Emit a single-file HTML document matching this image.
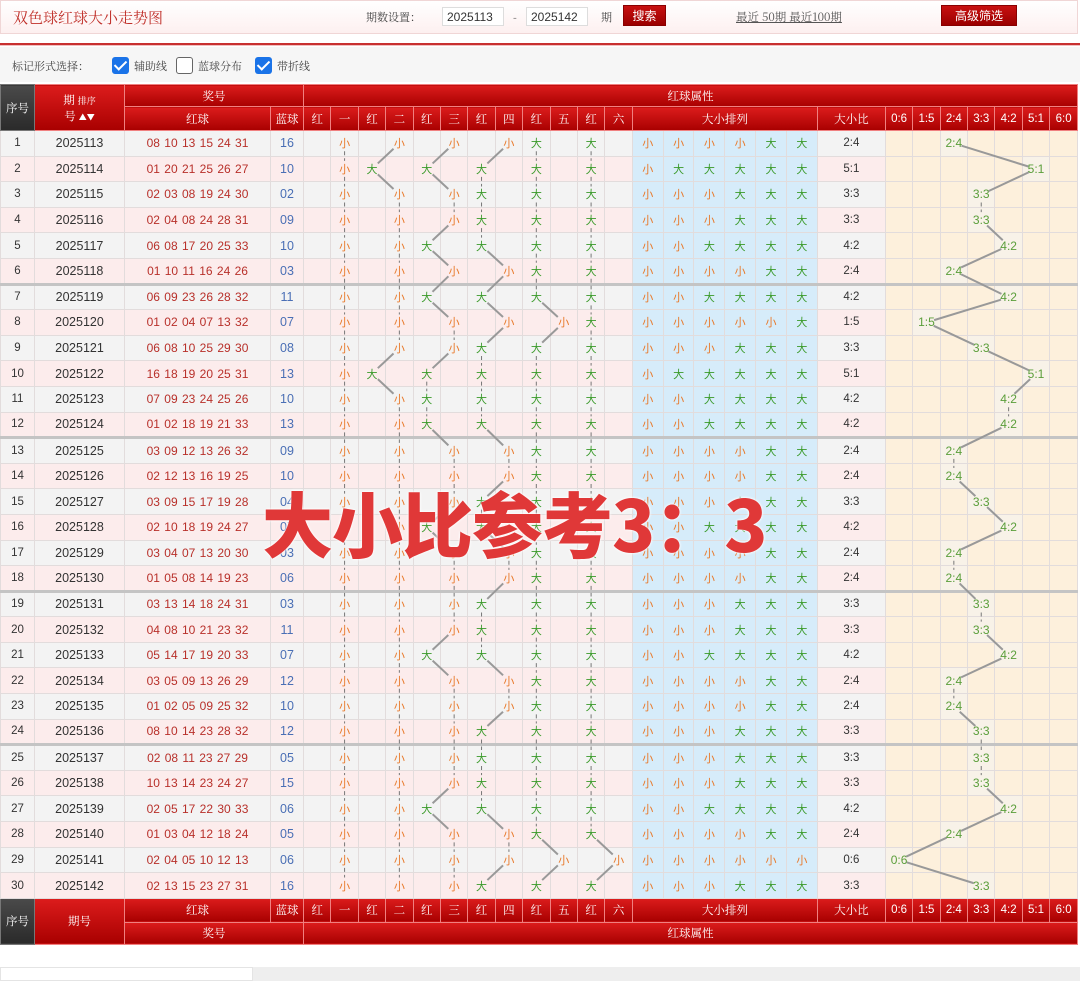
<!DOCTYPE html>
<html><head><meta charset="utf-8">
<style>
*{box-sizing:border-box;margin:0;padding:0}
body{width:1080px;height:981px;overflow:hidden;background:#fff;font-family:"Liberation Sans","Noto Sans CJK SC",sans-serif;position:relative}
.top{position:absolute;left:0;top:0;width:1078px;height:34px;background:linear-gradient(#fff,#fdf0f0);border:1px solid #f0d6d6;font-family:"Noto Serif CJK SC",serif}
.title{position:absolute;left:12px;top:6px;font-size:15px;color:#c0302a}
.lbl{position:absolute;top:8px;font-size:11px;color:#444}
.inp{position:absolute;top:6px;width:62px;height:19px;border:1px solid #ddd;background:#fff;font:12px "Liberation Sans",sans-serif;color:#333;padding:2px 4px}
.btn{position:absolute;background:linear-gradient(#c81010,#9a0000);color:#fff;font-size:12px;text-align:center;border:1px solid #800;font-family:"Noto Sans CJK SC",sans-serif}
.lnk{position:absolute;left:735px;top:8px;font-size:11.5px;color:#555;text-decoration:underline}
.redline{position:absolute;left:0;top:43px;width:1080px;height:3px;border-top:2px solid #c83030;border-bottom:1px solid #f0c0c0}
.opt{position:absolute;left:0;top:47px;width:1080px;height:35px;background:#f6f6f6;font-family:"Noto Serif CJK SC",serif;font-size:11px;color:#444}
.cb{position:absolute;top:10px;width:17px;height:17px;border-radius:3px}
.cb.on{background:#1a73e8}
.cb.on:after{content:"";position:absolute;left:5px;top:1px;width:5px;height:10px;border:solid #fff;border-width:0 2.5px 2.5px 0;transform:rotate(45deg)}
.cb.off{border:1.5px solid #666;background:#fff}
table{position:absolute;left:0;top:84px;width:1077px;border-collapse:collapse;table-layout:fixed}
th{background:linear-gradient(#dc1c1c,#a80000);color:#fff;font-weight:normal;font-size:11.5px;border:1px solid #f08080;font-family:"Noto Serif CJK SC",serif;height:22px;padding:0}
th.dk{background:linear-gradient(#4a4a4a,#2a2a2a);border-color:#777}
th.sm{font-family:"Liberation Sans",sans-serif;font-size:11.5px}
thead tr:nth-child(2) th,tfoot tr:nth-child(1) th{height:24px}
tbody tr{height:25.6px}
td{border:1px solid #e2dcdc;text-align:center;font-size:11.5px;color:#333;padding:0;white-space:nowrap;overflow:hidden}
tbody tr:nth-child(odd) td{background:#f3f3f3}
tbody tr:nth-child(even) td{background:#fcecec}
tbody tr td:nth-child(n+17):nth-child(-n+22){background:#d6ecfa}
tbody tr td:nth-child(n+24){background:#fdf0dc}
tbody tr td.c{background:#f8f2e8}
td:nth-child(2){font-size:12.5px}
td.rb{color:#b8302a;font-size:12px;word-spacing:1px}
td.bb{color:#4a6fb5;font-size:12.5px}
td.s{color:#e8792a;font-family:"Noto Sans CJK SC",sans-serif;font-size:11px}
td.g{color:#3a9a2a;font-family:"Noto Sans CJK SC",sans-serif;font-size:11px}
td.c{color:#5a9e3a;font-size:12px}
i{font-style:normal;position:relative;z-index:2}
tr.gp td{border-top:3px solid #c4c4c4}
#ov{position:absolute;left:0;top:0;width:1080px;height:981px;pointer-events:none;z-index:3}
.wm{position:absolute;left:262px;top:471px;font-family:"Noto Sans CJK SC",sans-serif;font-weight:900;font-size:71px;letter-spacing:-1px;color:#e03838;z-index:5;text-shadow:0 0 3px #fff,0 0 2px #fff;white-space:nowrap}
.bot{position:absolute;left:0;top:967px;width:1080px;height:14px;background:#eee}
.bot div{width:253px;height:14px;background:#fff;border:1px solid #e4e4e4}
</style></head><body>
<div class="top">
<div class="title">双色球红球大小走势图</div>
<div class="lbl" style="left:365px">期数设置：</div>
<div class="inp" style="left:441px">2025113</div>
<div class="lbl" style="left:512px">-</div>
<div class="inp" style="left:525px">2025142</div>
<div class="lbl" style="left:600px">期</div>
<div class="btn" style="left:622px;top:4px;width:43px;height:21px;line-height:19px">搜索</div>
<div class="lnk">最近 50期 最近100期</div>
<div class="btn" style="left:940px;top:4px;width:76px;height:21px;line-height:19px">高级筛选</div>
</div>
<div class="redline"></div>
<div class="opt">
<span style="position:absolute;left:12px;top:11px">标记形式选择：</span>
<div class="cb on" style="left:112px"></div><span style="position:absolute;left:134px;top:11px">辅助线</span>
<div class="cb off" style="left:176px"></div><span style="position:absolute;left:198px;top:11px">蓝球分布</span>
<div class="cb on" style="left:255px"></div><span style="position:absolute;left:277px;top:11px">带折线</span>
</div>
<table>
<colgroup><col style="width:34px"><col style="width:90px"><col style="width:146px"><col style="width:33px">
<col style="width:27.4px"><col style="width:27.4px"><col style="width:27.4px"><col style="width:27.4px"><col style="width:27.4px"><col style="width:27.4px"><col style="width:27.4px"><col style="width:27.4px"><col style="width:27.4px"><col style="width:27.4px"><col style="width:27.4px"><col style="width:27.6px">
<col style="width:30.8px"><col style="width:30.8px"><col style="width:30.8px"><col style="width:30.8px"><col style="width:30.8px"><col style="width:31px">
<col style="width:68px">
<col style="width:27.4px"><col style="width:27.4px"><col style="width:27.4px"><col style="width:27.4px"><col style="width:27.4px"><col style="width:27.4px"><col style="width:27.6px"></colgroup>
<thead>
<tr><th class="dk" rowspan="2">序号</th><th rowspan="2">期 <span style="font-size:9px">排序</span><br>号 <span style="font-size:8px">▲▼</span></th><th colspan="2">奖号</th><th colspan="26">红球属性</th></tr>
<tr><th>红球</th><th>蓝球</th><th>红</th><th>一</th><th>红</th><th>二</th><th>红</th><th>三</th><th>红</th><th>四</th><th>红</th><th>五</th><th>红</th><th>六</th><th colspan="6">大小排列</th><th>大小比</th><th class="sm">0:6</th><th class="sm">1:5</th><th class="sm">2:4</th><th class="sm">3:3</th><th class="sm">4:2</th><th class="sm">5:1</th><th class="sm">6:0</th></tr>
</thead>
<tbody>
<tr><td>1<td>2025113<td class=rb>08 10 13 15 24 31<td class=bb>16<td><td class=s><i>小</i><td><td class=s><i>小</i><td><td class=s><i>小</i><td><td class=s><i>小</i><td class=g><i>大</i><td><td class=g><i>大</i><td><td class=s>小<td class=s>小<td class=s>小<td class=s>小<td class=g>大<td class=g>大<td>2:4<td><td><td class=c><i>2:4</i><td><td><td><td></tr>
<tr><td>2<td>2025114<td class=rb>01 20 21 25 26 27<td class=bb>10<td><td class=s><i>小</i><td class=g><i>大</i><td><td class=g><i>大</i><td><td class=g><i>大</i><td><td class=g><i>大</i><td><td class=g><i>大</i><td><td class=s>小<td class=g>大<td class=g>大<td class=g>大<td class=g>大<td class=g>大<td>5:1<td><td><td><td><td><td class=c><i>5:1</i><td></tr>
<tr><td>3<td>2025115<td class=rb>02 03 08 19 24 30<td class=bb>02<td><td class=s><i>小</i><td><td class=s><i>小</i><td><td class=s><i>小</i><td class=g><i>大</i><td><td class=g><i>大</i><td><td class=g><i>大</i><td><td class=s>小<td class=s>小<td class=s>小<td class=g>大<td class=g>大<td class=g>大<td>3:3<td><td><td><td class=c><i>3:3</i><td><td><td></tr>
<tr><td>4<td>2025116<td class=rb>02 04 08 24 28 31<td class=bb>09<td><td class=s><i>小</i><td><td class=s><i>小</i><td><td class=s><i>小</i><td class=g><i>大</i><td><td class=g><i>大</i><td><td class=g><i>大</i><td><td class=s>小<td class=s>小<td class=s>小<td class=g>大<td class=g>大<td class=g>大<td>3:3<td><td><td><td class=c><i>3:3</i><td><td><td></tr>
<tr><td>5<td>2025117<td class=rb>06 08 17 20 25 33<td class=bb>10<td><td class=s><i>小</i><td><td class=s><i>小</i><td class=g><i>大</i><td><td class=g><i>大</i><td><td class=g><i>大</i><td><td class=g><i>大</i><td><td class=s>小<td class=s>小<td class=g>大<td class=g>大<td class=g>大<td class=g>大<td>4:2<td><td><td><td><td class=c><i>4:2</i><td><td></tr>
<tr><td>6<td>2025118<td class=rb>01 10 11 16 24 26<td class=bb>03<td><td class=s><i>小</i><td><td class=s><i>小</i><td><td class=s><i>小</i><td><td class=s><i>小</i><td class=g><i>大</i><td><td class=g><i>大</i><td><td class=s>小<td class=s>小<td class=s>小<td class=s>小<td class=g>大<td class=g>大<td>2:4<td><td><td class=c><i>2:4</i><td><td><td><td></tr>
<tr class=gp><td>7<td>2025119<td class=rb>06 09 23 26 28 32<td class=bb>11<td><td class=s><i>小</i><td><td class=s><i>小</i><td class=g><i>大</i><td><td class=g><i>大</i><td><td class=g><i>大</i><td><td class=g><i>大</i><td><td class=s>小<td class=s>小<td class=g>大<td class=g>大<td class=g>大<td class=g>大<td>4:2<td><td><td><td><td class=c><i>4:2</i><td><td></tr>
<tr><td>8<td>2025120<td class=rb>01 02 04 07 13 32<td class=bb>07<td><td class=s><i>小</i><td><td class=s><i>小</i><td><td class=s><i>小</i><td><td class=s><i>小</i><td><td class=s><i>小</i><td class=g><i>大</i><td><td class=s>小<td class=s>小<td class=s>小<td class=s>小<td class=s>小<td class=g>大<td>1:5<td><td class=c><i>1:5</i><td><td><td><td><td></tr>
<tr><td>9<td>2025121<td class=rb>06 08 10 25 29 30<td class=bb>08<td><td class=s><i>小</i><td><td class=s><i>小</i><td><td class=s><i>小</i><td class=g><i>大</i><td><td class=g><i>大</i><td><td class=g><i>大</i><td><td class=s>小<td class=s>小<td class=s>小<td class=g>大<td class=g>大<td class=g>大<td>3:3<td><td><td><td class=c><i>3:3</i><td><td><td></tr>
<tr><td>10<td>2025122<td class=rb>16 18 19 20 25 31<td class=bb>13<td><td class=s><i>小</i><td class=g><i>大</i><td><td class=g><i>大</i><td><td class=g><i>大</i><td><td class=g><i>大</i><td><td class=g><i>大</i><td><td class=s>小<td class=g>大<td class=g>大<td class=g>大<td class=g>大<td class=g>大<td>5:1<td><td><td><td><td><td class=c><i>5:1</i><td></tr>
<tr><td>11<td>2025123<td class=rb>07 09 23 24 25 26<td class=bb>10<td><td class=s><i>小</i><td><td class=s><i>小</i><td class=g><i>大</i><td><td class=g><i>大</i><td><td class=g><i>大</i><td><td class=g><i>大</i><td><td class=s>小<td class=s>小<td class=g>大<td class=g>大<td class=g>大<td class=g>大<td>4:2<td><td><td><td><td class=c><i>4:2</i><td><td></tr>
<tr><td>12<td>2025124<td class=rb>01 02 18 19 21 33<td class=bb>13<td><td class=s><i>小</i><td><td class=s><i>小</i><td class=g><i>大</i><td><td class=g><i>大</i><td><td class=g><i>大</i><td><td class=g><i>大</i><td><td class=s>小<td class=s>小<td class=g>大<td class=g>大<td class=g>大<td class=g>大<td>4:2<td><td><td><td><td class=c><i>4:2</i><td><td></tr>
<tr class=gp><td>13<td>2025125<td class=rb>03 09 12 13 26 32<td class=bb>09<td><td class=s><i>小</i><td><td class=s><i>小</i><td><td class=s><i>小</i><td><td class=s><i>小</i><td class=g><i>大</i><td><td class=g><i>大</i><td><td class=s>小<td class=s>小<td class=s>小<td class=s>小<td class=g>大<td class=g>大<td>2:4<td><td><td class=c><i>2:4</i><td><td><td><td></tr>
<tr><td>14<td>2025126<td class=rb>02 12 13 16 19 25<td class=bb>10<td><td class=s><i>小</i><td><td class=s><i>小</i><td><td class=s><i>小</i><td><td class=s><i>小</i><td class=g><i>大</i><td><td class=g><i>大</i><td><td class=s>小<td class=s>小<td class=s>小<td class=s>小<td class=g>大<td class=g>大<td>2:4<td><td><td class=c><i>2:4</i><td><td><td><td></tr>
<tr><td>15<td>2025127<td class=rb>03 09 15 17 19 28<td class=bb>04<td><td class=s><i>小</i><td><td class=s><i>小</i><td><td class=s><i>小</i><td class=g><i>大</i><td><td class=g><i>大</i><td><td class=g><i>大</i><td><td class=s>小<td class=s>小<td class=s>小<td class=g>大<td class=g>大<td class=g>大<td>3:3<td><td><td><td class=c><i>3:3</i><td><td><td></tr>
<tr><td>16<td>2025128<td class=rb>02 10 18 19 24 27<td class=bb>07<td><td class=s><i>小</i><td><td class=s><i>小</i><td class=g><i>大</i><td><td class=g><i>大</i><td><td class=g><i>大</i><td><td class=g><i>大</i><td><td class=s>小<td class=s>小<td class=g>大<td class=g>大<td class=g>大<td class=g>大<td>4:2<td><td><td><td><td class=c><i>4:2</i><td><td></tr>
<tr><td>17<td>2025129<td class=rb>03 04 07 13 20 30<td class=bb>03<td><td class=s><i>小</i><td><td class=s><i>小</i><td><td class=s><i>小</i><td><td class=s><i>小</i><td class=g><i>大</i><td><td class=g><i>大</i><td><td class=s>小<td class=s>小<td class=s>小<td class=s>小<td class=g>大<td class=g>大<td>2:4<td><td><td class=c><i>2:4</i><td><td><td><td></tr>
<tr><td>18<td>2025130<td class=rb>01 05 08 14 19 23<td class=bb>06<td><td class=s><i>小</i><td><td class=s><i>小</i><td><td class=s><i>小</i><td><td class=s><i>小</i><td class=g><i>大</i><td><td class=g><i>大</i><td><td class=s>小<td class=s>小<td class=s>小<td class=s>小<td class=g>大<td class=g>大<td>2:4<td><td><td class=c><i>2:4</i><td><td><td><td></tr>
<tr class=gp><td>19<td>2025131<td class=rb>03 13 14 18 24 31<td class=bb>03<td><td class=s><i>小</i><td><td class=s><i>小</i><td><td class=s><i>小</i><td class=g><i>大</i><td><td class=g><i>大</i><td><td class=g><i>大</i><td><td class=s>小<td class=s>小<td class=s>小<td class=g>大<td class=g>大<td class=g>大<td>3:3<td><td><td><td class=c><i>3:3</i><td><td><td></tr>
<tr><td>20<td>2025132<td class=rb>04 08 10 21 23 32<td class=bb>11<td><td class=s><i>小</i><td><td class=s><i>小</i><td><td class=s><i>小</i><td class=g><i>大</i><td><td class=g><i>大</i><td><td class=g><i>大</i><td><td class=s>小<td class=s>小<td class=s>小<td class=g>大<td class=g>大<td class=g>大<td>3:3<td><td><td><td class=c><i>3:3</i><td><td><td></tr>
<tr><td>21<td>2025133<td class=rb>05 14 17 19 20 33<td class=bb>07<td><td class=s><i>小</i><td><td class=s><i>小</i><td class=g><i>大</i><td><td class=g><i>大</i><td><td class=g><i>大</i><td><td class=g><i>大</i><td><td class=s>小<td class=s>小<td class=g>大<td class=g>大<td class=g>大<td class=g>大<td>4:2<td><td><td><td><td class=c><i>4:2</i><td><td></tr>
<tr><td>22<td>2025134<td class=rb>03 05 09 13 26 29<td class=bb>12<td><td class=s><i>小</i><td><td class=s><i>小</i><td><td class=s><i>小</i><td><td class=s><i>小</i><td class=g><i>大</i><td><td class=g><i>大</i><td><td class=s>小<td class=s>小<td class=s>小<td class=s>小<td class=g>大<td class=g>大<td>2:4<td><td><td class=c><i>2:4</i><td><td><td><td></tr>
<tr><td>23<td>2025135<td class=rb>01 02 05 09 25 32<td class=bb>10<td><td class=s><i>小</i><td><td class=s><i>小</i><td><td class=s><i>小</i><td><td class=s><i>小</i><td class=g><i>大</i><td><td class=g><i>大</i><td><td class=s>小<td class=s>小<td class=s>小<td class=s>小<td class=g>大<td class=g>大<td>2:4<td><td><td class=c><i>2:4</i><td><td><td><td></tr>
<tr><td>24<td>2025136<td class=rb>08 10 14 23 28 32<td class=bb>12<td><td class=s><i>小</i><td><td class=s><i>小</i><td><td class=s><i>小</i><td class=g><i>大</i><td><td class=g><i>大</i><td><td class=g><i>大</i><td><td class=s>小<td class=s>小<td class=s>小<td class=g>大<td class=g>大<td class=g>大<td>3:3<td><td><td><td class=c><i>3:3</i><td><td><td></tr>
<tr class=gp><td>25<td>2025137<td class=rb>02 08 11 23 27 29<td class=bb>05<td><td class=s><i>小</i><td><td class=s><i>小</i><td><td class=s><i>小</i><td class=g><i>大</i><td><td class=g><i>大</i><td><td class=g><i>大</i><td><td class=s>小<td class=s>小<td class=s>小<td class=g>大<td class=g>大<td class=g>大<td>3:3<td><td><td><td class=c><i>3:3</i><td><td><td></tr>
<tr><td>26<td>2025138<td class=rb>10 13 14 23 24 27<td class=bb>15<td><td class=s><i>小</i><td><td class=s><i>小</i><td><td class=s><i>小</i><td class=g><i>大</i><td><td class=g><i>大</i><td><td class=g><i>大</i><td><td class=s>小<td class=s>小<td class=s>小<td class=g>大<td class=g>大<td class=g>大<td>3:3<td><td><td><td class=c><i>3:3</i><td><td><td></tr>
<tr><td>27<td>2025139<td class=rb>02 05 17 22 30 33<td class=bb>06<td><td class=s><i>小</i><td><td class=s><i>小</i><td class=g><i>大</i><td><td class=g><i>大</i><td><td class=g><i>大</i><td><td class=g><i>大</i><td><td class=s>小<td class=s>小<td class=g>大<td class=g>大<td class=g>大<td class=g>大<td>4:2<td><td><td><td><td class=c><i>4:2</i><td><td></tr>
<tr><td>28<td>2025140<td class=rb>01 03 04 12 18 24<td class=bb>05<td><td class=s><i>小</i><td><td class=s><i>小</i><td><td class=s><i>小</i><td><td class=s><i>小</i><td class=g><i>大</i><td><td class=g><i>大</i><td><td class=s>小<td class=s>小<td class=s>小<td class=s>小<td class=g>大<td class=g>大<td>2:4<td><td><td class=c><i>2:4</i><td><td><td><td></tr>
<tr><td>29<td>2025141<td class=rb>02 04 05 10 12 13<td class=bb>06<td><td class=s><i>小</i><td><td class=s><i>小</i><td><td class=s><i>小</i><td><td class=s><i>小</i><td><td class=s><i>小</i><td><td class=s><i>小</i><td class=s>小<td class=s>小<td class=s>小<td class=s>小<td class=s>小<td class=s>小<td>0:6<td class=c><i>0:6</i><td><td><td><td><td><td></tr>
<tr><td>30<td>2025142<td class=rb>02 13 15 23 27 31<td class=bb>16<td><td class=s><i>小</i><td><td class=s><i>小</i><td><td class=s><i>小</i><td class=g><i>大</i><td><td class=g><i>大</i><td><td class=g><i>大</i><td><td class=s>小<td class=s>小<td class=s>小<td class=g>大<td class=g>大<td class=g>大<td>3:3<td><td><td><td class=c><i>3:3</i><td><td><td></tr>
</tbody>
<tfoot>
<tr><th class="dk" rowspan="2">序号</th><th rowspan="2">期号</th><th>红球</th><th>蓝球</th><th>红</th><th>一</th><th>红</th><th>二</th><th>红</th><th>三</th><th>红</th><th>四</th><th>红</th><th>五</th><th>红</th><th>六</th><th colspan="6">大小排列</th><th>大小比</th><th class="sm">0:6</th><th class="sm">1:5</th><th class="sm">2:4</th><th class="sm">3:3</th><th class="sm">4:2</th><th class="sm">5:1</th><th class="sm">6:0</th></tr>
<tr><th colspan="2">奖号</th><th colspan="26">红球属性</th></tr>
</tfoot>
</table>
<svg id="ov" xmlns="http://www.w3.org/2000/svg"></svg>
<div class="wm">大小比参考3：3</div>
<div class="bot"><div></div></div>
<script>
(function(){
var svg=document.getElementById('ov'),NS='http://www.w3.org/2000/svg';
var rows=[].slice.call(document.querySelectorAll('tbody tr'));
var pts=rows.map(function(r){return [].slice.call(r.querySelectorAll('i')).map(function(e){var b=e.getBoundingClientRect();return [b.left+b.width/2,b.top+b.height/2];});});
for(var r=0;r<pts.length-1;r++){for(var k=0;k<pts[r].length;k++){
var a=pts[r][k],b=pts[r+1][k];if(!a||!b)continue;
var l=document.createElementNS(NS,'line');
if(Math.abs(a[0]-b[0])<2){
l.setAttribute('x1',a[0]);l.setAttribute('x2',b[0]);l.setAttribute('y1',a[1]+8);l.setAttribute('y2',b[1]-8);
l.setAttribute('stroke','#777');l.setAttribute('stroke-width','1');l.setAttribute('stroke-dasharray','4 3');
}else{
var dx=b[0]-a[0],dy=b[1]-a[1],L=Math.sqrt(dx*dx+dy*dy),t=8/L;
l.setAttribute('x1',a[0]+dx*t);l.setAttribute('y1',a[1]+dy*t);l.setAttribute('x2',b[0]-dx*t);l.setAttribute('y2',b[1]-dy*t);
l.setAttribute('stroke','#999');l.setAttribute('stroke-width','2');}
svg.appendChild(l);}}
})();
</script>
</body></html>
